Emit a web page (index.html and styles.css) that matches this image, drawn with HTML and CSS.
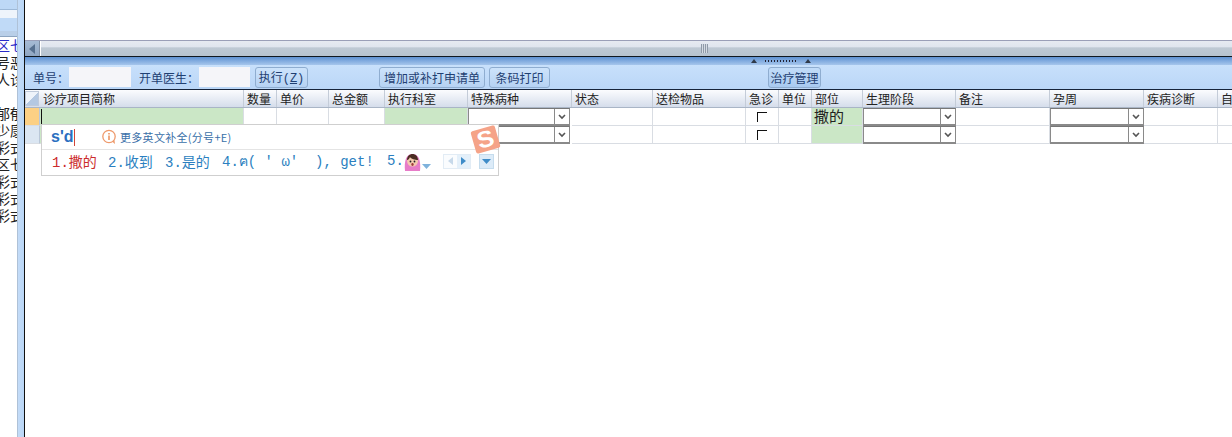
FILE: index.html
```html
<!DOCTYPE html>
<html lang="zh">
<head>
<meta charset="utf-8">
<title>诊疗项目</title>
<link rel="stylesheet" href="styles.css">
</head>
<body>
<div class="app">
  <aside class="side">
    <div class="side-a"></div>
    <div class="side-b"></div>
    <div class="side-c"></div>
    <div class="side-d"></div>
    <div class="side-list">
      <div class="side-row link">区七</div>
      <div class="side-row">号恶</div>
      <div class="side-row">人诊</div>
      <div class="side-row"></div>
      <div class="side-row">郁郁</div>
      <div class="side-row">少康</div>
      <div class="side-row">彩式</div>
      <div class="side-row">区七</div>
      <div class="side-row">彩式</div>
      <div class="side-row">彩式</div>
      <div class="side-row">彩式</div>
    </div>
  </aside>
  <div class="strip"></div>
  <main class="main">
    <div class="blank"></div>
    <div class="hscroll">
      <div class="arrow-btn"><svg width="8" height="10" viewBox="0 0 8 10"><path d="M7 0v10L1 5z" fill="#56708f"/></svg></div>
      <div class="thumb"><span class="grip"></span></div>
    </div>
    <div class="splitter">
      <span class="tri tri-a"></span><span class="dots"></span><span class="tri tri-b"></span>
    </div>
    <div class="toolbar">
      <span class="lbl lbl-a">单号：</span><span class="inp inp-a"></span>
      <span class="lbl lbl-b">开单医生：</span><span class="inp inp-b"></span>
      <button class="btn btn-a">执行(<u>Z</u>)</button>
      <button class="btn btn-b">增加或补打申请单</button>
      <button class="btn btn-c">条码打印</button>
      <button class="btn btn-d">治疗管理</button>
    </div>
    <div class="grid">
      <div class="row head">
        <div class="corner"></div>
        <div>诊疗项目简称</div><div>数量</div><div>单价</div><div>总金额</div><div>执行科室</div><div>特殊病种</div><div>状态</div><div>送检物品</div><div>急诊</div><div>单位</div><div>部位</div><div>生理阶段</div><div>备注</div><div>孕周</div><div>疾病诊断</div><div>自</div>
      </div>
      <div class="row body">
        <div class="rh current"></div>
        <div class="green caret-cell"><span class="caret"></span></div><div></div><div></div><div></div><div class="green"></div>
        <div class="sel sel-narrow"><span class="sel-box"></span><span class="sel-btn"><svg width="8" height="6" viewBox="0 0 8 6"><path d="M1 1l3 3 3-3" fill="none" stroke="#555" stroke-width="1.6"/></svg></span></div>
        <div></div><div></div><div class="chk"><span class="check"></span></div><div></div><div class="green val">撒的</div>
        <div class="sel"><span class="sel-box"></span><span class="sel-btn"><svg width="8" height="6" viewBox="0 0 8 6"><path d="M1 1l3 3 3-3" fill="none" stroke="#555" stroke-width="1.6"/></svg></span></div>
        <div></div>
        <div class="sel"><span class="sel-box"></span><span class="sel-btn"><svg width="8" height="6" viewBox="0 0 8 6"><path d="M1 1l3 3 3-3" fill="none" stroke="#555" stroke-width="1.6"/></svg></span></div>
        <div></div><div></div>
      </div>
      <div class="row body">
        <div class="rh"></div>
        <div class="green"></div><div></div><div></div><div></div><div class="green"></div>
        <div class="sel sel-narrow"><span class="sel-box"></span><span class="sel-btn"><svg width="8" height="6" viewBox="0 0 8 6"><path d="M1 1l3 3 3-3" fill="none" stroke="#555" stroke-width="1.6"/></svg></span></div>
        <div></div><div></div><div class="chk"><span class="check"></span></div><div></div><div class="green"></div>
        <div class="sel"><span class="sel-box"></span><span class="sel-btn"><svg width="8" height="6" viewBox="0 0 8 6"><path d="M1 1l3 3 3-3" fill="none" stroke="#555" stroke-width="1.6"/></svg></span></div>
        <div></div>
        <div class="sel"><span class="sel-box"></span><span class="sel-btn"><svg width="8" height="6" viewBox="0 0 8 6"><path d="M1 1l3 3 3-3" fill="none" stroke="#555" stroke-width="1.6"/></svg></span></div>
        <div></div><div></div>
      </div>
    </div>
  </main>
</div>

<div class="ime">
  <div class="ime-top">
    <span class="pinyin">s'd<span class="ime-caret"></span></span>
    <svg class="tip-icon" width="16" height="16" viewBox="0 0 16 16"><circle cx="8" cy="7.5" r="6.2" fill="#fff" stroke="#ee9a6c" stroke-width="1.3"/><path d="M11 12.5l3 2.5-.6-4z" fill="#ee9a6c"/><rect x="7.3" y="6.5" width="1.4" height="4.5" fill="#e8874f"/><rect x="7.3" y="4" width="1.4" height="1.5" fill="#e8874f"/></svg>
    <span class="tip">更多英文补全(分号+E)</span>
  </div>
  <div class="ime-cands">
    <span class="cand c1">1.撒的</span>
    <span class="cand c2">2.收到</span>
    <span class="cand c3">3.是的</span>
    <span class="cand c4">4.ฅ( ' ω'  ), get!</span>
    <span class="cand c5">5.</span>
    <svg class="emoji" width="17" height="19" viewBox="0 0 17 19"><path d="M1 18C0 8 2 1 8.500 1S17 8 16 18z" fill="#e77cc8"/><circle cx="8.500" cy="8" r="5.500" fill="#f4c9ae"/><path d="M3 7c0-4 3-6 5.500-6S14 3 14 7c-3 0-7-1-8-3-.5 1.500-1.500 3-3 3z" fill="#4a2d22"/><circle cx="6.500" cy="8.500" r=".9" fill="#222"/><circle cx="10.500" cy="8.500" r=".9" fill="#222"/><ellipse cx="8.500" cy="11.500" rx="1.200" ry="1.400" fill="#9a3a3a"/></svg>
    <svg class="more" width="9" height="5" viewBox="0 0 9 5"><path d="M0 0h9L4.500 5z" fill="#7fb2dc"/></svg>
    <span class="nav">
      <span class="nav-b"><svg width="5" height="8" viewBox="0 0 5 8"><path d="M5 0v8L0 4z" fill="#c7d9ea"/></svg></span><span class="nav-b"><svg width="5" height="8" viewBox="0 0 5 8"><path d="M0 0v8l5-4z" fill="#3f8cc8"/></svg></span>
    </span>
    <span class="drop"><svg width="9" height="5" viewBox="0 0 9 5"><path d="M0 0h9L4.500 5z" fill="#3f8cc8"/></svg></span>
  </div>
  <span class="logo"><span class="logo-s">S</span></span>
</div>
</body>
</html>
```
FILE: styles.css
```css
* { box-sizing: border-box; }
html, body { margin: 0; height: 437px; overflow: hidden; background: #fff; }
body { font-family: "Noto Sans CJK SC", "Liberation Sans", sans-serif; font-size: 12px; color: #222; position: relative; }

.app { display: flex; width: 1232px; height: 437px; }

/* left clipped list */
.side { width: 17px; overflow: hidden; flex: none; background: #fff; }
.side-a { height: 10px; background: #bdd8f6; border-bottom: 1px solid #9db9d8; }
.side-b { height: 8px; background: #eef4fb; }
.side-c { height: 13px; background: #c0daf7; }
.side-d { height: 6px; background: #b9cfe8; border-bottom: 1px solid #8da5c0; }
.side-row { height: 17px; line-height: 17px; font-size: 14px; white-space: nowrap; margin-left: -4px; color: #222; overflow: hidden; }
.link { color: #2a2ac8; }

.strip { flex: none; background: linear-gradient(90deg, #9aa7b6 0, #c4dcf8 1px, #b9d6f6 100%); border-right: 1px solid #111; width: 8px; }

.main { flex: 1; min-width: 0; display: flex; flex-direction: column; overflow: hidden; }
.blank { height: 40px; background: #fff; }

.hscroll { height: 17px; display: flex; background: #9fb0c4; border-top: 1px solid #9a9fb8; border-bottom: 1px solid #101820; }
.arrow-btn { width: 15px; display: flex; align-items: center; justify-content: center; background: linear-gradient(#a6bbd4, #8fa6c2); border-right: 1px solid #7f8ea3; }
.thumb { flex: 1; display: flex; align-items: center; justify-content: center; padding-left: 136px; border-left: 1px solid #fff; background: linear-gradient(#e6eaf1 0, #dfe5ee 40%, #bec9d4 45%, #b7c3cf 100%); }
.grip { width: 7px; height: 9px; background: repeating-linear-gradient(90deg, #8f9aa8 0 1px, #d5dbe3 1px 2px); }

.splitter { height: 8px; display: flex; align-items: center; padding-left: 726px; background: linear-gradient(#5f92d2, #a6c6ec); }
.tri { width: 0; height: 0; border-left: 3px solid transparent; border-right: 3px solid transparent; border-bottom: 4px solid #2f3a4a; }
.tri-b { margin-left: 9px; }
.dots { width: 31px; height: 2px; margin-left: 8px; background: repeating-linear-gradient(90deg, #223 0 1px, transparent 1px 3px); }

.toolbar { height: 25px; display: flex; align-items: center; background: linear-gradient(#c8e0fb, #bad6f7); border-bottom: 1px solid #16233a; color: #1f3f72; }
.lbl { flex: none; white-space: nowrap; }
.lbl-a { margin-left: 8px; width: 36px; }
.lbl-b { margin-left: 8px; width: 60px; }
.inp { height: 20px; background: #f5f5f9; flex: none; }
.inp-a { width: 62px; }
.inp-b { width: 51px; }
.btn { height: 21px; padding: 0; font: inherit; color: #1f3f72; background: linear-gradient(#cde3fb, #b6d2f3); border: 1px solid #8fadd0; border-radius: 3px; flex: none; white-space: nowrap; }
.btn-a { width: 53px; margin-left: 5px; font-family: "Liberation Mono", "Noto Sans CJK SC", monospace; }
.btn-b { width: 106px; margin-left: 71px; }
.btn-c { width: 61px; margin-left: 4px; }
.btn-d { width: 53px; margin-left: 218px; background: linear-gradient(#c2dcf9, #a9caf0); }

.grid { flex: 1; background: #fff; }
.row { display: grid; grid-template-columns: 15px 204px 33px 52px 56px 83px 104px 81px 93px 33px 33px 51px 93px 94px 94px 74px 60px; }
.head { height: 18px; background: linear-gradient(#fbfcfe, #d5ddeb); border-bottom: 1px solid #a9b5c6; }
.head > div { line-height: 18px; padding-left: 3px; border-right: 1px solid #c4ccd8; white-space: nowrap; overflow: hidden; color: #222; }
.head > .corner { padding: 0; background: linear-gradient(135deg, #eef3fa 50%, #b4c8e2 50%); border: 1px solid #bfcadb; margin: 1px 1px 1px 0; }
.body { height: 18px; }
.body > div { border-right: 1px solid #d9dde3; border-bottom: 1px solid #d9dde3; min-width: 0; }
.body > .rh { background: #dbe6f2; border-right: 1px solid #b9c7d8; }
.body > .current { background: #fcd084; }
.body > .green { background: #cbe7c6; }
.caret-cell { display: flex; align-items: center; }
.caret { width: 1px; height: 15px; background: #111; margin-left: 1px; }
.body > .val { font-size: 15px; line-height: 16px; padding-left: 2px; }
.chk { display: flex; justify-content: center; align-items: flex-start; padding-top: 4px; }
.check { width: 10px; height: 10px; border-top: 1px solid #111; border-left: 1px solid #111; }
.body > .sel { display: flex; border: 1px solid #8a8a8a; border-top-color: #777; border-bottom: 2px solid #8a8a8a; }
.body > .sel-narrow { margin-right: 2px; }
.sel-box { flex: 1; background: #fff; }
.sel-btn { width: 15px; display: flex; align-items: center; justify-content: center; background: #fff; border-left: 1px solid #8a8a8a; }

/* floating IME window */
.ime { position: absolute; left: 41px; top: 124px; width: 458px; height: 52px; background: #fff; border: 1px solid #cfcfcf; color: #2b7fc0; }
.ime-top { height: 25px; display: flex; align-items: center; border-bottom: 1px solid #e4e4e4; padding-left: 9px; }
.pinyin { width: 50px; display: flex; align-items: center; font-family: "Liberation Sans", sans-serif; font-weight: 700; font-size: 16px; color: #2b6fc0; }
.ime-caret { width: 1px; height: 17px; background: #d0453a; margin-left: 1px; }
.tip-icon { flex: none; margin-right: 3px; }
.tip { font-size: 11px; letter-spacing: .3px; color: #3a6fa8; white-space: nowrap; }
.ime-cands { height: 25px; display: flex; align-items: center; font-family: "Liberation Mono", "Noto Sans CJK SC", monospace; font-size: 14px; padding: 0 0 3px 10px; white-space: pre; }
.cand { flex: none; }
.c1 { width: 56px; color: #cc2b2b; }
.c2 { width: 57px; }
.c3 { width: 57px; }
.c4 { width: 165px; }
.c5 { width: 17px; }
.emoji { flex: none; margin-top: 2px; }
.more { flex: none; margin: 10px 0 0 1px; }
.nav { display: flex; margin-left: 12px; border: 1px solid #e2ecf5; }
.nav-b { width: 13px; height: 13px; display: flex; align-items: center; justify-content: center; background: #fafcfe; }
.nav-b + .nav-b { background: #e4f0fa; }
.drop { width: 15px; height: 15px; margin-left: 8px; display: flex; align-items: center; justify-content: center; background: #dcebf8; border: 1px solid #c5dced; }
.logo { position: absolute; left: 431px; top: 3px; width: 25px; height: 23px; background: #f5a388; border-radius: 2px; transform: rotate(-16deg); display: flex; align-items: center; justify-content: center; }
.logo-s { font-family: "Liberation Sans", sans-serif; font-weight: 700; font-size: 23px; line-height: 23px; color: #fff; transform: scaleX(1.1); }
```
